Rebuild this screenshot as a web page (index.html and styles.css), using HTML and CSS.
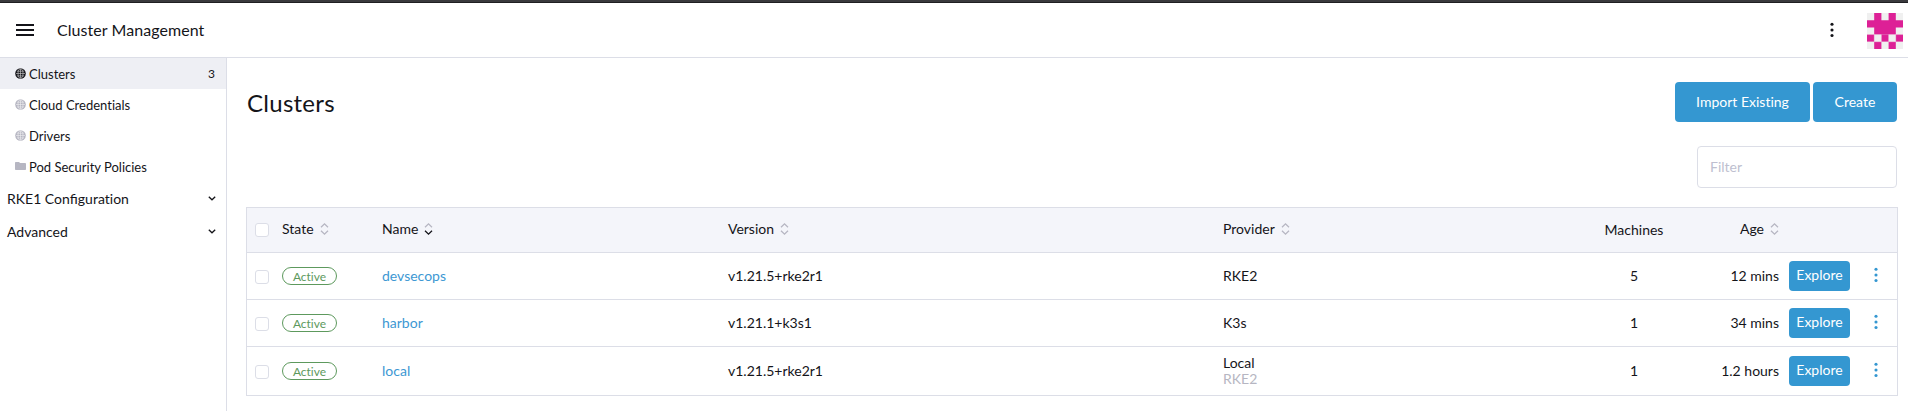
FILE: index.html
```html
<!DOCTYPE html>
<html lang="en">
<head>
<meta charset="utf-8">
<title>Cluster Management</title>
<link rel="stylesheet" href="styles.css">
</head>
<body>
<svg class="defs" width="0" height="0">
  <symbol id="globe" viewBox="0 0 11 11"><circle cx="5.5" cy="5.5" r="5.3" fill="currentColor"/><g fill="none" stroke="#fff" stroke-width=".6" opacity=".8"><path d="M5.5 1v9M1 5.5h9M1.9 3.2h7.2M1.9 7.9h7.2"/><ellipse cx="5.5" cy="5.5" rx="2.5" ry="4.6"/></g></symbol>
  <symbol id="folder" viewBox="0 0 11 10"><path d="M0 1.8Q0 1 .8 1H4l1.1 1.1h5.1q.8 0 .8.8v5.3q0 .8-.8.8H.8Q0 9 0 8.2z" fill="currentColor"/></symbol>
  <symbol id="chevron" viewBox="0 0 8 5"><path d="M.8.8 4 3.8 7.2.8" fill="none" stroke="currentColor" stroke-width="1.3"/></symbol>
  <symbol id="sort" viewBox="0 0 9 12"><path class="sort-up" d="M1 4.2 4.5.9 8 4.2"/><path d="M1 7.8l3.5 3.3L8 7.8" fill="none" stroke="currentColor" stroke-width="1.3"/></symbol>
  <symbol id="dots" viewBox="0 0 4 16"><g fill="currentColor"><circle cx="2" cy="2.2" r="1.55"/><circle cx="2" cy="8" r="1.55"/><circle cx="2" cy="13.5" r="1.55"/></g></symbol>
</svg>
<div class="topline"></div>
<header class="header">
  <svg class="menu" viewBox="0 0 18 12"><path d="M0 1h18M0 6h18M0 11h18" stroke="#141419" stroke-width="2"/></svg>
  <div class="title">Cluster Management</div>
  <svg class="dots header-dots"><use href="#dots"/></svg>
  <svg class="avatar" viewBox="0 0 5 5"><path fill="#f0f0f0" d="M0 0h5v5H0z"/><path fill="#dd2096" d="M1 0h1v1h1V0h1v1h1v1H4v1H1V2H0V1h1zM0 3h1v1H0zM2 3h1v1H2zM4 3h1v1H4zM1 4h1v1H1zM3 4h1v1H3z"/><path d="M0 3h5M0 4h5M1 3v1M2 3v1M3 3v1M4 3v1" stroke="#f0f0f0" stroke-width=".07" opacity=".5"/></svg>
</header>
<div class="body">
  <nav class="nav">
    <div class="item active"><svg class="icon"><use href="#globe"/></svg><span>Clusters</span><span class="count">3</span></div>
    <div class="item"><svg class="icon"><use href="#globe"/></svg><span>Cloud Credentials</span></div>
    <div class="item"><svg class="icon"><use href="#globe"/></svg><span>Drivers</span></div>
    <div class="item"><svg class="icon folder"><use href="#folder"/></svg><span>Pod Security Policies</span></div>
    <div class="group"><span>RKE1 Con<span class="joined">fi</span>guration</span><svg class="chevron"><use href="#chevron"/></svg></div>
    <div class="group"><span>Advanced</span><svg class="chevron"><use href="#chevron"/></svg></div>
  </nav>
  <main class="main">
    <div class="heading">
      <h1>Clusters</h1>
      <div class="actions"><button class="btn import">Import Existing</button><button class="btn create">Create</button></div>
    </div>
    <div class="search"><input class="filter" type="text" placeholder="Filter"></div>
    <div class="table">
      <div class="row head">
        <span class="check"></span>
        <span class="sortable">State<svg class="sort"><use href="#sort"/></svg></span>
        <span class="sortable">Name<svg class="sort sorted"><use href="#sort"/></svg></span>
        <span class="sortable">Version<svg class="sort"><use href="#sort"/></svg></span>
        <span class="sortable">Provider<svg class="sort"><use href="#sort"/></svg></span>
        <span class="machines">Machines</span>
        <span class="sortable age">Age<svg class="sort"><use href="#sort"/></svg></span>
      </div>
      <div class="row">
        <span class="check"></span><span class="badge">Active</span><a class="link">devsecops</a><span>v1.21.5+rke2r1</span><span>RKE2</span><span class="machines">5</span><span class="age">12 mins</span><button class="btn explore">Explore</button><svg class="dots"><use href="#dots"/></svg>
      </div>
      <div class="row">
        <span class="check"></span><span class="badge">Active</span><a class="link">harbor</a><span>v1.21.1+k3s1</span><span>K3s</span><span class="machines">1</span><span class="age">34 mins</span><button class="btn explore">Explore</button><svg class="dots"><use href="#dots"/></svg>
      </div>
      <div class="row tall">
        <span class="check"></span><span class="badge">Active</span><a class="link">local</a><span>v1.21.5+rke2r1</span><div class="provider">Local<div class="muted">RKE2</div></div><span class="machines">1</span><span class="age">1.2 hours</span><button class="btn explore">Explore</button><svg class="dots"><use href="#dots"/></svg>
      </div>
    </div>
  </main>
</div>
</body>
</html>
```
FILE: styles.css
```css
* { box-sizing: border-box; }
body { margin: 0; height: 411px; overflow: hidden; display: flex; flex-direction: column; background: #fff; color: #141419; font: 14px/16px Lato, sans-serif; font-variant-ligatures: none; }
.joined { font-variant-ligatures: normal; }
.defs { position: absolute; }
.topline { height: 3px; flex: none; background: #3a3a3d; border-bottom: 1px solid #1f1f22; }
.header { height: 55px; flex: none; display: flex; align-items: center; padding: 0 5px 0 16px; border-bottom: 1px solid #dcdee7; }
.menu { width: 18px; height: 12px; margin-right: 23px; }
.title { font-size: 16px; line-height: 20px; letter-spacing: .06px; }
.dots { width: 4px; height: 16px; color: #3497d1; }
.header-dots { margin-left: auto; margin-right: 33px; color: #141419; }
.avatar { width: 36px; height: 36px; margin-top: 2px; }
.body { flex: 1; display: flex; }
.nav { width: 227px; flex: none; border-right: 1px solid #dcdee7; }
.item { height: 31px; display: flex; align-items: center; padding: 1px 11px 0 15px; font-size: 13px; }
.active { background: #eeeff4; }
.icon { width: 11px; height: 11px; flex: none; margin-right: 3px; margin-top: -2px; color: #b6b6c2; }
.folder { height: 10px; }
.active .icon { color: #141419; }
.count { margin-left: auto; font-size: 12px; }
.group { height: 33px; display: flex; align-items: center; justify-content: space-between; padding: 0 10px 0 7px; }
.chevron { width: 8px; height: 5px; }
.main { flex: 1; padding: 24px 10px 0 19px; }
.heading { display: flex; justify-content: space-between; margin-right: 1px; }
h1 { margin: 6px 0 0 1px; font-size: 24px; line-height: 29px; font-weight: 400; letter-spacing: .27px; }
.actions { display: flex; gap: 3px; }
.btn { border: 0; border-radius: 4px; height: 40px; padding: 0; background: #3497d1; color: #fff; font: inherit; font-variant-ligatures: none; }
.import { width: 135px; }
.create { width: 84px; }
.search { display: flex; justify-content: flex-end; margin: 24px 1px 19px 0; }
.filter { width: 200px; height: 42px; border: 1px solid #dcdee7; border-radius: 4px; padding: 0 12px 1px; font: inherit; }
.filter::placeholder { color: #bebfd0; }
.table { border: 1px solid #dcdee7; }
.row { height: 47px; display: grid; grid-template-columns: 35px 100px 346px 495px 346px 130px 80px 95px 4px; align-items: center; border-bottom: 1px solid #dcdee7; }
.row .dots { margin-top: -2px; }
.head { height: 45px; background: #f4f5fa; padding-bottom: 1px; }
.tall { height: 48px; border-bottom: 0; }
.check { width: 14px; height: 14px; margin: 2px 0 0 8px; border: 1px solid #dcdee7; border-radius: 3px; background: #fff; }
.head .check { margin-top: 0; }
.sortable { display: flex; align-items: center; gap: 6px; margin-top: -1px; }
.sort { width: 9px; height: 12px; color: #b6b6c2; }
.sort-up { fill: none; stroke: #b6b6c2; stroke-width: 1.3; }
.sorted { color: #141419; }
.machines { text-align: center; }
.age { text-align: right; justify-content: flex-end; }
.badge { width: 55px; height: 18px; border: 1px solid #5d995d; border-radius: 9px; color: #5d995d; font-size: 12px; line-height: 18px; text-align: center; }
.link { color: #3d98d3; }
.explore { width: 61px; height: 30px; margin-left: 10px; padding-bottom: 2px; }
.muted { color: #b6b6c2; }
```
